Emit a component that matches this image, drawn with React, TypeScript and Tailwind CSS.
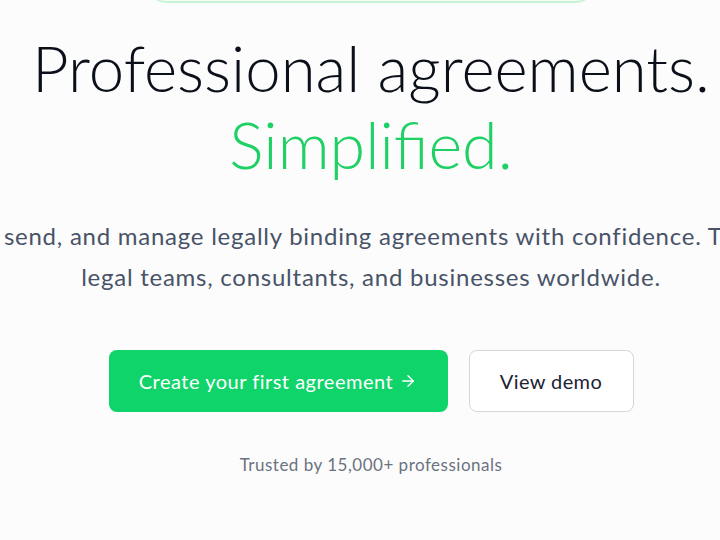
import { ArrowRight } from 'lucide-react';

export default function App() {
  return (
    <div className="w-[720px] h-[540px] overflow-hidden bg-[#fcfcfc] font-['Lato','Noto_Sans',sans-serif]">
      <div className="w-[742px] flex flex-col items-center">
        {/* badge, mostly scrolled out of view */}
        <div className="-mt-[33px] w-[446px] h-[36px] rounded-full border-2 border-[#c9f3d6] bg-[#f3fcf6]" />

        <h1 className="mt-[27px] text-center text-[63.5px] leading-[76px] font-light text-[#0b0f19] whitespace-nowrap">
          <span className="block">Professional agreements.</span>
          <span className="block text-[64.5px] text-[#1fd065]">Simplified.</span>
        </h1>

        <p className="mt-[33px] text-center text-[24px] leading-[41px] tracking-[0.75px] text-[#485368] whitespace-nowrap">
          Create, send, and manage legally binding agreements with confidence. Trusted by
          <br />
          legal teams, consultants, and businesses worldwide.
        </p>

        <div className="mt-[53px] flex items-center gap-[21px]">
          <button className="w-[339px] h-[62px] rounded-lg bg-[#0fd46a] text-white text-[20px] tracking-[0.5px] flex items-center justify-center gap-1.5">
            Create your first agreement
            <ArrowRight className="w-[18px] h-[18px]" strokeWidth={2} />
          </button>
          <button className="w-[165px] h-[62px] rounded-lg border border-[#d4d7dd] bg-white text-[#1c2333] text-[20px] tracking-[0.4px]">
            View demo
          </button>
        </div>

        <p className="mt-[41px] text-[17px] leading-6 tracking-[0.5px] text-[#6b7280]">Trusted by 15,000+ professionals</p>
      </div>
    </div>
  );
}
